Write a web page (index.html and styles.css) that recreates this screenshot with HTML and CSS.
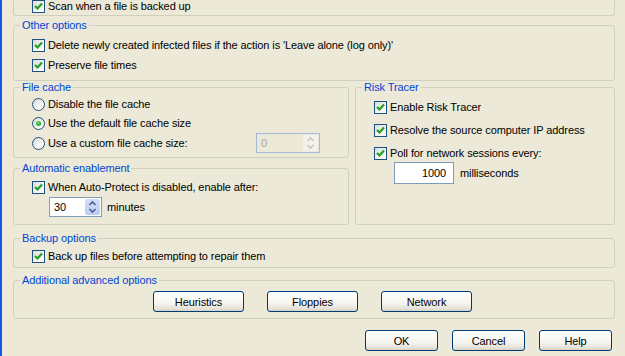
FILE: index.html
```html
<!DOCTYPE html>
<html lang="en">
<head>
    <meta charset="UTF-8">
    <title>Auto-Protect Advanced Options</title>
    <link rel="stylesheet" href="styles.css">
</head>
<body>
<div class="window">
    <div class="group group-top">
        <div class="opt opt-cut">
            <span class="check"><svg width="11" height="11" viewBox="0 0 11 11"><polyline points="2,5 4.5,7.5 9,2.5"/></svg></span>Scan when a file is backed up
        </div>
    </div>

    <fieldset class="group other">
        <legend>Other options</legend>
        <div class="body">
            <div class="opt"><span class="check"><svg width="11" height="11" viewBox="0 0 11 11"><polyline points="2,5 4.5,7.5 9,2.5"/></svg></span>Delete newly created infected files if the action is 'Leave alone (log only)'</div>
            <div class="opt"><span class="check"><svg width="11" height="11" viewBox="0 0 11 11"><polyline points="2,5 4.5,7.5 9,2.5"/></svg></span>Preserve file times</div>
        </div>
    </fieldset>

    <div class="cols">
        <div class="col-left">
            <fieldset class="group cache">
                <legend>File cache</legend>
                <div class="body">
                    <div class="choice"><span class="radio"></span>Disable the file cache</div>
                    <div class="choice"><span class="radio on"></span>Use the default file cache size</div>
                    <div class="choice choice-last">
                        <span class="radio"></span>Use a custom file cache size:
                        <span class="spin spin-off cache-size">
                            <span class="spin-val">0</span>
                            <span class="spin-btn">
                                <svg width="13" height="16" viewBox="0 0 13 16"><path d="M3.5 6 L6.5 3 L9.5 6 M3.5 10 L6.5 13 L9.5 10"/></svg>
                            </span>
                        </span>
                    </div>
                </div>
            </fieldset>

            <fieldset class="group auto">
                <legend>Automatic enablement</legend>
                <div class="body">
                    <div class="opt"><span class="check"><svg width="11" height="11" viewBox="0 0 11 11"><polyline points="2,5 4.5,7.5 9,2.5"/></svg></span>When Auto-Protect is disabled, enable after:</div>
                    <div class="spin-row">
                        <span class="spin minutes">
                            <span class="spin-val">30</span>
                            <span class="spin-btn">
                                <svg width="13" height="16" viewBox="0 0 13 16"><path d="M3.5 6 L6.5 3 L9.5 6 M3.5 10 L6.5 13 L9.5 10"/></svg>
                            </span>
                        </span>
                        <span>minutes</span>
                    </div>
                </div>
            </fieldset>
        </div>

        <fieldset class="group tracer">
            <legend>Risk Tracer</legend>
            <div class="body">
                <div class="opt"><span class="check"><svg width="11" height="11" viewBox="0 0 11 11"><polyline points="2,5 4.5,7.5 9,2.5"/></svg></span>Enable Risk Tracer</div>
                <div class="opt"><span class="check"><svg width="11" height="11" viewBox="0 0 11 11"><polyline points="2,5 4.5,7.5 9,2.5"/></svg></span>Resolve the source computer IP address</div>
                <div class="opt"><span class="check"><svg width="11" height="11" viewBox="0 0 11 11"><polyline points="2,5 4.5,7.5 9,2.5"/></svg></span>Poll for network sessions every:</div>
                <div class="poll-row">
                    <span class="edit">1000</span>
                    <span>milliseconds</span>
                </div>
            </div>
        </fieldset>
    </div>

    <fieldset class="group backup">
        <legend>Backup options</legend>
        <div class="body">
            <div class="opt"><span class="check"><svg width="11" height="11" viewBox="0 0 11 11"><polyline points="2,5 4.5,7.5 9,2.5"/></svg></span>Back up files before attempting to repair them</div>
        </div>
    </fieldset>

    <fieldset class="group extra">
        <legend>Additional advanced options</legend>
        <div class="body">
            <button class="btn btn-wide">Heuristics</button>
            <button class="btn btn-wide">Floppies</button>
            <button class="btn btn-wide">Network</button>
        </div>
    </fieldset>

    <div class="actions">
        <button class="btn">OK</button>
        <button class="btn">Cancel</button>
        <button class="btn">Help</button>
    </div>
</div>
</body>
</html>
```

FILE: styles.css
```css
body {
    margin: 0;
    background-color: #ece9d8;
    font-family: "Liberation Sans", Arial, sans-serif;
    font-size: 11px;
    line-height: 13px;
    letter-spacing: -0.1px;
    color: #000;
    overflow: hidden;
}
.window {
    height: 356px;
    border-left: 2px solid #1656e6;
    padding: 0 10px 0 11px;
    box-sizing: border-box;
    overflow: hidden;
}

/* group boxes */
.group {
    margin: 0;
    padding: 0;
    min-width: 0;
    border: 1px solid #d0d0bf;
    border-radius: 3px;
}
.group legend {
    color: #0046d5;
    padding: 0 2px;
    margin-left: 6px;
    line-height: 13px;
}
.group .body {
    padding-left: 18px;
    display: flex;
    flex-direction: column;
}
.group-top {
    border-top: none;
    border-radius: 0 0 3px 3px;
    height: 15px;
    padding-left: 18px;
}
.other {
    margin-top: 3px;
}
.other .body {
    padding-top: 7px;
    padding-bottom: 8px;
    gap: 7px;
}
.cols {
    display: flex;
    gap: 6px;
}
.col-left {
    width: 336px;
    display: flex;
    flex-direction: column;
}
.cache .body {
    padding-top: 1px;
    padding-bottom: 4px;
    padding-right: 28px;
}
.auto {
    margin-top: 4px;
}
.auto .body {
    padding-top: 6px;
    padding-bottom: 7px;
}
.tracer {
    flex: 1;
}
.tracer .body {
    padding-top: 7px;
    gap: 10px;
}
.backup {
    margin-top: 7px;
}
.backup .body {
    padding-top: 5px;
    padding-bottom: 4px;
}
.extra {
    margin-top: 6px;
}
.extra .body {
    flex-direction: row;
    padding: 4px 0 6px 139px;
    gap: 23px;
}

/* check boxes and radios */
.opt {
    display: flex;
    align-items: center;
    height: 13px;
    white-space: nowrap;
}
.check {
    width: 13px;
    height: 13px;
    box-sizing: border-box;
    border: 1px solid #1c5180;
    background: linear-gradient(135deg, #dcdcd7 0%, #f4f4f1 60%, #ffffff 100%);
    margin-right: 3px;
    flex-shrink: 0;
    display: flex;
}
.check svg polyline {
    fill: none;
    stroke: #21a121;
    stroke-width: 2.2;
}
.choice {
    display: flex;
    align-items: center;
    height: 19px;
    white-space: nowrap;
}
.choice-last {
    height: 20px;
}
.radio {
    width: 13px;
    height: 13px;
    box-sizing: border-box;
    border: 1px solid #1c5180;
    border-radius: 50%;
    background: linear-gradient(135deg, #d8d8d2 0%, #f4f4f1 60%, #ffffff 100%);
    margin-right: 3px;
    flex-shrink: 0;
    display: flex;
    align-items: center;
    justify-content: center;
}
.radio.on::after {
    content: "";
    width: 5px;
    height: 5px;
    border-radius: 50%;
    background: radial-gradient(circle at 40% 40%, #6be36b 0%, #21a121 70%);
}

/* spin boxes and edits */
.spin {
    display: flex;
    height: 20px;
    box-sizing: border-box;
    border: 1px solid #7f9db9;
    background: #fff;
}
.spin-val {
    flex: 1;
    padding-left: 4px;
    line-height: 18px;
}
.spin-btn {
    width: 15px;
    margin: 1px;
    border-radius: 2px;
    background: linear-gradient(#d3defc, #b9cdf6);
    display: flex;
    align-items: center;
    justify-content: center;
}
.spin-btn path {
    fill: none;
    stroke: #4d6185;
    stroke-width: 1.6;
}
.cache-size {
    width: 64px;
    margin-left: auto;
}
.spin-off {
    border-color: #a5b9d9;
    background: #ece9d8;
    color: #aca899;
}
.spin-off .spin-btn {
    background: #f3f2ec;
}
.spin-off .spin-btn path {
    stroke: #c9c7ba;
}
.spin-row {
    display: flex;
    align-items: center;
    gap: 5px;
    margin: 3px 0 0 17px;
}
.minutes {
    width: 53px;
}
.poll-row {
    display: flex;
    align-items: center;
    gap: 6px;
    margin: -8px 0 0 20px;
}
.edit {
    width: 60px;
    height: 22px;
    box-sizing: border-box;
    border: 1px solid #7f9db9;
    background: #fff;
    text-align: right;
    padding-right: 7px;
    line-height: 20px;
}

/* buttons */
.btn {
    font-family: inherit;
    font-size: 11px;
    letter-spacing: -0.1px;
    color: #000;
    width: 73px;
    height: 21px;
    padding: 0;
    border: 1px solid #003c74;
    border-radius: 3px;
    background: linear-gradient(#ffffff 0%, #f5f4ef 60%, #e3e0d5 90%, #d6d0c5 100%);
}
.btn-wide {
    width: 91px;
}
.actions {
    display: flex;
    justify-content: flex-end;
    gap: 14px;
    margin-top: 11px;
    padding-right: 3px;
}
```
